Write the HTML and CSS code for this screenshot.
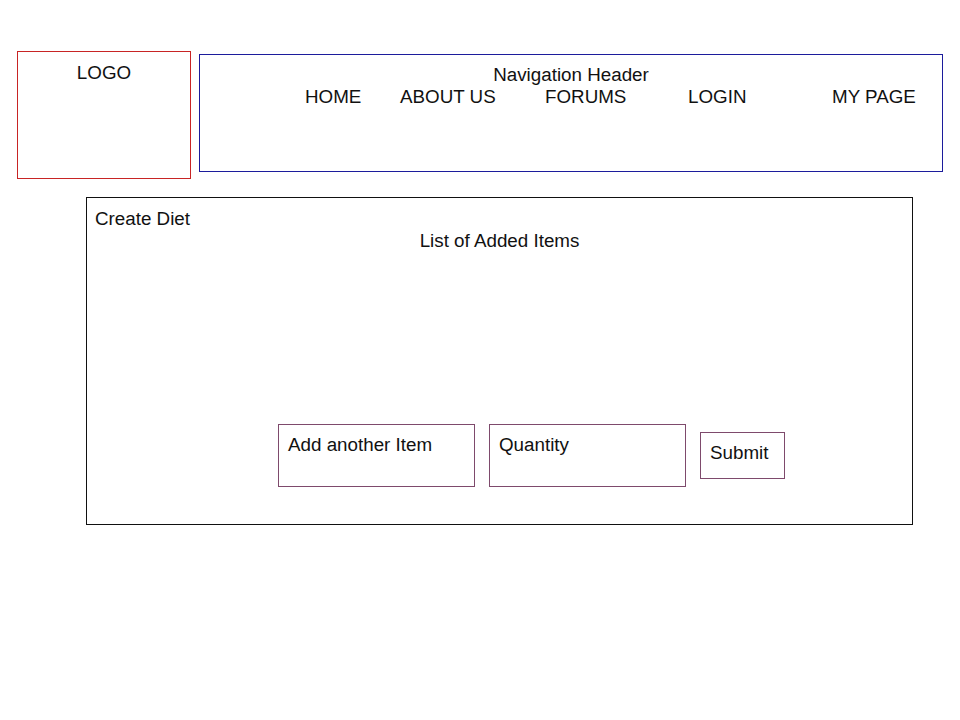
FILE: index.html
```html
<!DOCTYPE html>
<html lang="en">
<head>
<meta charset="utf-8">
<title>Create Diet</title>
<link rel="stylesheet" href="styles.css">
</head>
<body>
<div class="page">
  <header class="top">
    <div class="logo">LOGO</div>
    <nav class="nav">
      <div class="nav-title">Navigation Header</div>
      <ul class="nav-links">
        <li>HOME</li>
        <li>ABOUT US</li>
        <li>FORUMS</li>
        <li>LOGIN</li>
        <li>MY PAGE</li>
      </ul>
    </nav>
  </header>
  <main class="diet">
    <div class="diet-title">Create Diet</div>
    <div class="list-title">List of Added Items</div>
    <div class="add-row">
      <div class="field">Add another Item</div>
      <div class="field">Quantity</div>
      <div class="submit">Submit</div>
    </div>
  </main>
</div>
</body>
</html>
```

FILE: styles.css
```css
* { box-sizing: border-box; }
html, body { margin: 0; padding: 0; background: #fff; }
body {
  font-family: "Liberation Sans", Arial, sans-serif;
  font-size: 18.8px;
  line-height: 21px;
  color: #111;
}
.page { padding: 51px 0 0 17px; }
.top { display: flex; align-items: flex-start; gap: 8px; }
.logo {
  width: 174px;
  height: 128px;
  border: 1px solid #c82424;
  text-align: center;
  padding-top: 10px;
}
.nav {
  width: 744px;
  height: 118px;
  margin-top: 3px;
  border: 1px solid #1c1c9c;
  padding-top: 9px;
}
.nav-title { text-align: center; }
.nav-links {
  list-style: none;
  margin: 0;
  padding: 1px 0 0 105px;
  display: grid;
  grid-template-columns: 95px 145px 143px 144px auto;
}
.diet {
  margin: 18px 0 0 69px;
  width: 827px;
  height: 328px;
  border: 1px solid #111;
  padding: 10px 8px 37px 8px;
  display: flex;
  flex-direction: column;
}
.list-title { text-align: center; margin-top: 1px; }
.add-row {
  margin-top: auto;
  padding-left: 183px;
  display: flex;
  align-items: center;
  gap: 14px;
}
.field {
  width: 197px;
  height: 63px;
  border: 1px solid #7e4a6c;
  padding: 9px 9px;
}
.submit {
  width: 85px;
  height: 47px;
  border: 1px solid #7e4a6c;
  padding: 9px 9px;
}
```
